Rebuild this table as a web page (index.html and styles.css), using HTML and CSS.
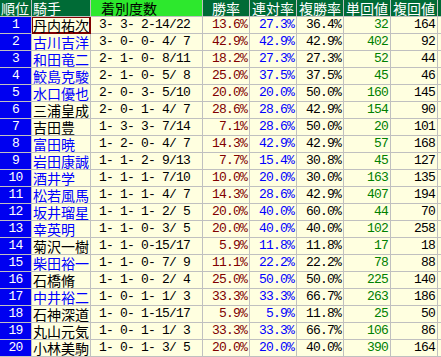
FILE: index.html
```html
<!DOCTYPE html>
<html lang="ja">
<head>
<meta charset="utf-8">
<title>騎手成績</title>
<link rel="stylesheet" href="styles.css">
</head>
<body>
<table class="stats">
<thead>
<tr>
<th class="c-rank hd-dark hd-left">順位</th>
<th class="c-name hd-dark hd-left">騎手</th>
<th class="c-rec hd-lime">着別度数</th>
<th class="c-pct hd-dark">勝率</th>
<th class="c-pct hd-dark">連対率</th>
<th class="c-pct hd-dark">複勝率</th>
<th class="c-pct hd-dark">単回値</th>
<th class="c-pct hd-dark">複回値</th>
<th class="c-more hd-dark"></th>
</tr>
</thead>
<tbody>
<tr><td class="rank">1</td><td class="name sel">丹内祐次</td><td class="rec">3- 3- 2-14/22</td><td class="num win">13.6%</td><td class="num ren">27.3%</td><td class="num fuku">36.4%</td><td class="num tan">32</td><td class="num fkv">164</td><td class="more"></td></tr>
<tr><td class="rank">2</td><td class="name link">古川吉洋</td><td class="rec">3- 0- 0- 4/ 7</td><td class="num win">42.9%</td><td class="num ren">42.9%</td><td class="num fuku">42.9%</td><td class="num tan">402</td><td class="num fkv">92</td><td class="more"></td></tr>
<tr><td class="rank">3</td><td class="name link">和田竜二</td><td class="rec">2- 1- 0- 8/11</td><td class="num win">18.2%</td><td class="num ren">27.3%</td><td class="num fuku">27.3%</td><td class="num tan">52</td><td class="num fkv">44</td><td class="more"></td></tr>
<tr><td class="rank">4</td><td class="name link">鮫島克駿</td><td class="rec">2- 1- 0- 5/ 8</td><td class="num win">25.0%</td><td class="num ren">37.5%</td><td class="num fuku">37.5%</td><td class="num tan">45</td><td class="num fkv">46</td><td class="more"></td></tr>
<tr><td class="rank">5</td><td class="name link">水口優也</td><td class="rec">2- 0- 3- 5/10</td><td class="num win">20.0%</td><td class="num ren">20.0%</td><td class="num fuku">50.0%</td><td class="num tan">160</td><td class="num fkv">145</td><td class="more"></td></tr>
<tr><td class="rank">6</td><td class="name">三浦皇成</td><td class="rec">2- 0- 1- 4/ 7</td><td class="num win">28.6%</td><td class="num ren">28.6%</td><td class="num fuku">42.9%</td><td class="num tan">154</td><td class="num fkv">90</td><td class="more"></td></tr>
<tr><td class="rank">7</td><td class="name">吉田豊</td><td class="rec">1- 3- 3- 7/14</td><td class="num win">7.1%</td><td class="num ren">28.6%</td><td class="num fuku">50.0%</td><td class="num tan">20</td><td class="num fkv">101</td><td class="more"></td></tr>
<tr><td class="rank">8</td><td class="name link">富田暁</td><td class="rec">1- 2- 0- 4/ 7</td><td class="num win">14.3%</td><td class="num ren">42.9%</td><td class="num fuku">42.9%</td><td class="num tan">57</td><td class="num fkv">168</td><td class="more"></td></tr>
<tr><td class="rank">9</td><td class="name link">岩田康誠</td><td class="rec">1- 1- 2- 9/13</td><td class="num win">7.7%</td><td class="num ren">15.4%</td><td class="num fuku">30.8%</td><td class="num tan">45</td><td class="num fkv">127</td><td class="more"></td></tr>
<tr><td class="rank">10</td><td class="name link">酒井学</td><td class="rec">1- 1- 1- 7/10</td><td class="num win">10.0%</td><td class="num ren">20.0%</td><td class="num fuku">30.0%</td><td class="num tan">163</td><td class="num fkv">135</td><td class="more"></td></tr>
<tr><td class="rank">11</td><td class="name link">松若風馬</td><td class="rec">1- 1- 1- 4/ 7</td><td class="num win">14.3%</td><td class="num ren">28.6%</td><td class="num fuku">42.9%</td><td class="num tan">407</td><td class="num fkv">194</td><td class="more"></td></tr>
<tr><td class="rank">12</td><td class="name link">坂井瑠星</td><td class="rec">1- 1- 1- 2/ 5</td><td class="num win">20.0%</td><td class="num ren">40.0%</td><td class="num fuku">60.0%</td><td class="num tan">44</td><td class="num fkv">70</td><td class="more"></td></tr>
<tr><td class="rank">13</td><td class="name link">幸英明</td><td class="rec">1- 1- 0- 3/ 5</td><td class="num win">20.0%</td><td class="num ren">40.0%</td><td class="num fuku">40.0%</td><td class="num tan">102</td><td class="num fkv">258</td><td class="more"></td></tr>
<tr><td class="rank">14</td><td class="name">菊沢一樹</td><td class="rec">1- 1- 0-15/17</td><td class="num win">5.9%</td><td class="num ren">11.8%</td><td class="num fuku">11.8%</td><td class="num tan">17</td><td class="num fkv">18</td><td class="more"></td></tr>
<tr><td class="rank">15</td><td class="name link">柴田裕一</td><td class="rec">1- 1- 0- 7/ 9</td><td class="num win">11.1%</td><td class="num ren">22.2%</td><td class="num fuku">22.2%</td><td class="num tan">78</td><td class="num fkv">88</td><td class="more"></td></tr>
<tr><td class="rank">16</td><td class="name">石橋脩</td><td class="rec">1- 1- 0- 2/ 4</td><td class="num win">25.0%</td><td class="num ren">50.0%</td><td class="num fuku">50.0%</td><td class="num tan">225</td><td class="num fkv">140</td><td class="more"></td></tr>
<tr><td class="rank">17</td><td class="name link">中井裕二</td><td class="rec">1- 0- 1- 1/ 3</td><td class="num win">33.3%</td><td class="num ren">33.3%</td><td class="num fuku">66.7%</td><td class="num tan">263</td><td class="num fkv">186</td><td class="more"></td></tr>
<tr><td class="rank">18</td><td class="name">石神深道</td><td class="rec">1- 0- 1-15/17</td><td class="num win">5.9%</td><td class="num ren">5.9%</td><td class="num fuku">11.8%</td><td class="num tan">25</td><td class="num fkv">50</td><td class="more"></td></tr>
<tr><td class="rank">19</td><td class="name">丸山元気</td><td class="rec">1- 0- 1- 1/ 3</td><td class="num win">33.3%</td><td class="num ren">33.3%</td><td class="num fuku">66.7%</td><td class="num tan">106</td><td class="num fkv">86</td><td class="more"></td></tr>
<tr><td class="rank">20</td><td class="name">小林美駒</td><td class="rec">1- 0- 1- 3/ 5</td><td class="num win">20.0%</td><td class="num ren">20.0%</td><td class="num fuku">40.0%</td><td class="num tan">390</td><td class="num fkv">164</td><td class="more"></td></tr>
</tbody>
</table>
</body>
</html>
```

FILE: styles.css
```css
html, body {
  margin: 0;
  padding: 0;
  background: #ffffff;
  overflow: hidden;
}

.stats {
  border-collapse: separate;
  border-spacing: 0;
  table-layout: fixed;
  width: 441px;
  font-family: "Noto Sans CJK JP", sans-serif;
  font-size: 14px;
}

.stats th,
.stats td {
  box-sizing: border-box;
  height: 17px;
  padding: 0;
  line-height: 16px;
  border-right: 1px solid #c0c0c0;
  border-bottom: 1px solid #c0c0c0;
  white-space: pre;
  vertical-align: middle;
}

.c-rank { width: 32px; }
.c-name { width: 59px; }
.c-rec { width: 112px; }
.c-pct { width: 47px; }
.c-more { width: 3px; }

.stats th.c-more,
.stats td.more {
  border-right: none;
}

.stats th {
  font-weight: normal;
  text-align: center;
}

.hd-dark {
  background: #006b36;
  color: #ffffff;
}

.hd-lime {
  background: #2de82d;
  color: #000000;
}

.stats th.hd-left { text-align: left; padding-left: 1px; }
.stats th.hd-lime { text-align: left; padding-left: 10px; }

.stats td {
  background: #ffffe0;
  color: #000000;
}

.stats td.rank {
  background: #0000f0;
  color: #ffffff;
  text-align: center;
  font-family: "Liberation Mono", monospace;
  font-size: 13px;
  letter-spacing: -0.8px;
}

.stats td.name {
  padding-left: 1px;
}

.stats td.link { color: #0000ff; }

.stats td.sel {
  box-shadow: inset 0 0 0 1px #800000;
  border-right-color: #800000;
  border-bottom-color: #800000;
}

.stats td.rec,
.stats td.num {
  font-family: "Liberation Mono", monospace;
  font-size: 13px;
  letter-spacing: -0.8px;
}

.stats td.rec { padding-left: 8px; }

.stats td.num {
  text-align: right;
  padding-right: 2px;
}

.stats td.win { color: #800000; }
.stats td.ren { color: #0000ff; }
.stats td.fuku { color: #000000; }
.stats td.tan { color: #008000; }
.stats td.fkv { color: #000000; }
```
